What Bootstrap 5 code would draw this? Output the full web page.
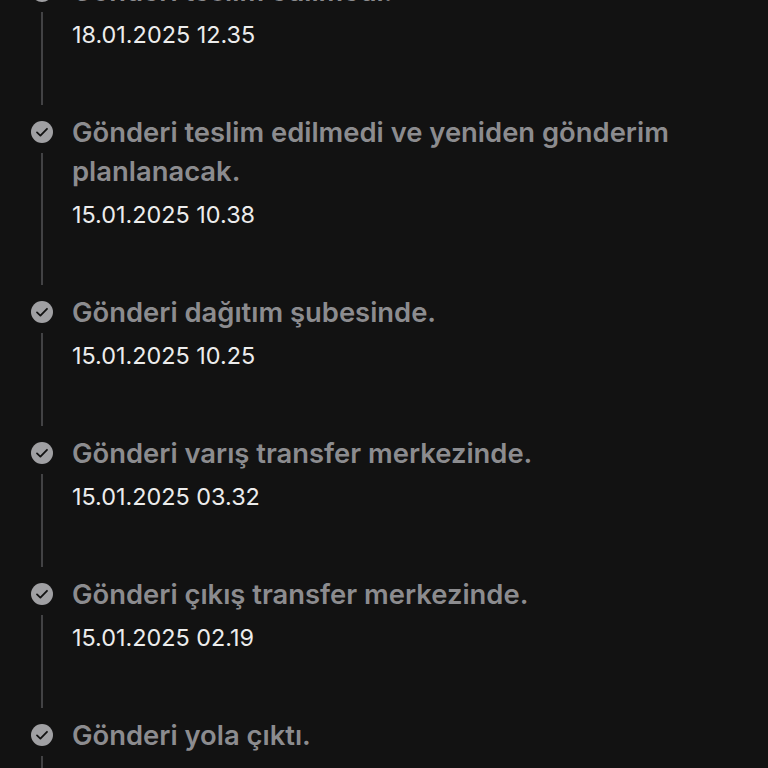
<!DOCTYPE html>
<html lang="tr">
<head>
    <meta charset="UTF-8">
    <title>Gönderi Takibi</title>
    <link href="https://cdn.jsdelivr.net/npm/bootstrap@5.3.0/dist/css/bootstrap.min.css" rel="stylesheet">
    <style>
        html, body {
            height: 100%;
            overflow: hidden;
        }
        body {
            background: #121212;
            font-family: Inter, "Liberation Sans", sans-serif;
        }
        .track-list {
            margin-top: -28px;
            padding-left: 30px;
            padding-right: 40px;
        }
        .track-item {
            padding-bottom: 62px;
        }
        .track-side {
            width: 24px;
            margin-right: 18px;
            padding-top: 8px;
        }
        .track-check {
            width: 22px;
            height: 22px;
            display: block;
        }
        .track-line {
            width: 2px;
            background: #424244;
            margin-top: 10px;
            margin-bottom: -54px;
        }
        .track-title {
            color: #8c8c8f;
            font-size: 27.4px;
            font-weight: 600;
            line-height: 39px;
        }
        .track-date {
            color: #ececec;
            font-size: 23.4px;
            line-height: 32px;
            margin-top: 8px;
        }
    </style>
</head>
<body>

<div class="track-list" id="trackList"></div>

<script src="https://cdn.jsdelivr.net/npm/bootstrap@5.3.0/dist/js/bootstrap.bundle.min.js"></script>
<script>
    const steps = [
        ["Gönderi teslim edilmedi.", "18.01.2025 12.35"],
        ["Gönderi teslim edilmedi ve yeniden gönderim planlanacak.", "15.01.2025 10.38"],
        ["Gönderi dağıtım şubesinde.", "15.01.2025 10.25"],
        ["Gönderi varış transfer merkezinde.", "15.01.2025 03.32"],
        ["Gönderi çıkış transfer merkezinde.", "15.01.2025 02.19"],
        ["Gönderi yola çıktı.", ""]
    ];

    const icon = `<svg class="track-check" viewBox="0 0 22 22">
        <circle cx="11" cy="11" r="11" fill="#a0a0a3"/>
        <path d="M6 11.4l3.4 3.2 6.6-6.8" fill="none" stroke="#121212" stroke-width="1.8" stroke-linecap="round" stroke-linejoin="round"/>
    </svg>`;

    document.getElementById('trackList').innerHTML = steps.map(s => `
        <div class="track-item d-flex">
            <div class="track-side d-flex flex-column align-items-center flex-shrink-0">
                ${icon}
                <div class="track-line flex-grow-1"></div>
            </div>
            <div>
                <div class="track-title">${s[0]}</div>
                ${s[1] ? `<div class="track-date">${s[1]}</div>` : ''}
            </div>
        </div>`).join('');
</script>

</body>
</html>
